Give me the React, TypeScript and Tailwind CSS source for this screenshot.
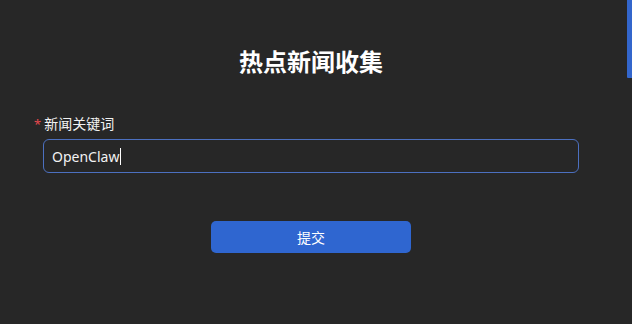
import React from "react";

export default function App() {
  return (
    <div
      className="relative w-[632px] h-[324px] overflow-hidden bg-[#272727] text-[#f2f2f2]"
      style={{ fontFamily: '"Noto Sans", "Noto Sans CJK SC", sans-serif' }}
    >
      <div className="absolute right-0 top-0 w-[5px] h-[78px] bg-[#3366cc] rounded-bl-[1px]" />
      <div className="flex flex-col pt-[46px]">
        <h1 className="text-center pr-[10px] text-[24px] leading-[32px] font-bold text-white">
          热点新闻收集
        </h1>
        <div className="mt-[35px] pl-[34px] flex items-center h-[22px] text-[14px] leading-[22px]">
          <span className="text-[#e5484d] mr-[3px] text-[13px]">*</span>
          <span>新闻关键词</span>
        </div>
        <div className="mt-[4px] ml-[43px] w-[536px] h-[34px] rounded-[6px] border border-[#4c70c0] flex items-center pl-[8px] text-[14px]">
          <span>OpenClaw</span>
          <span className="w-px h-[17px] bg-white ml-px" />
        </div>
        <div className="mt-[48px] flex justify-center pr-[10px]">
          <button className="w-[200px] h-[32px] rounded-[5px] bg-[#2f66d0] text-white text-[14px]">
            提交
          </button>
        </div>
      </div>
    </div>
  );
}
